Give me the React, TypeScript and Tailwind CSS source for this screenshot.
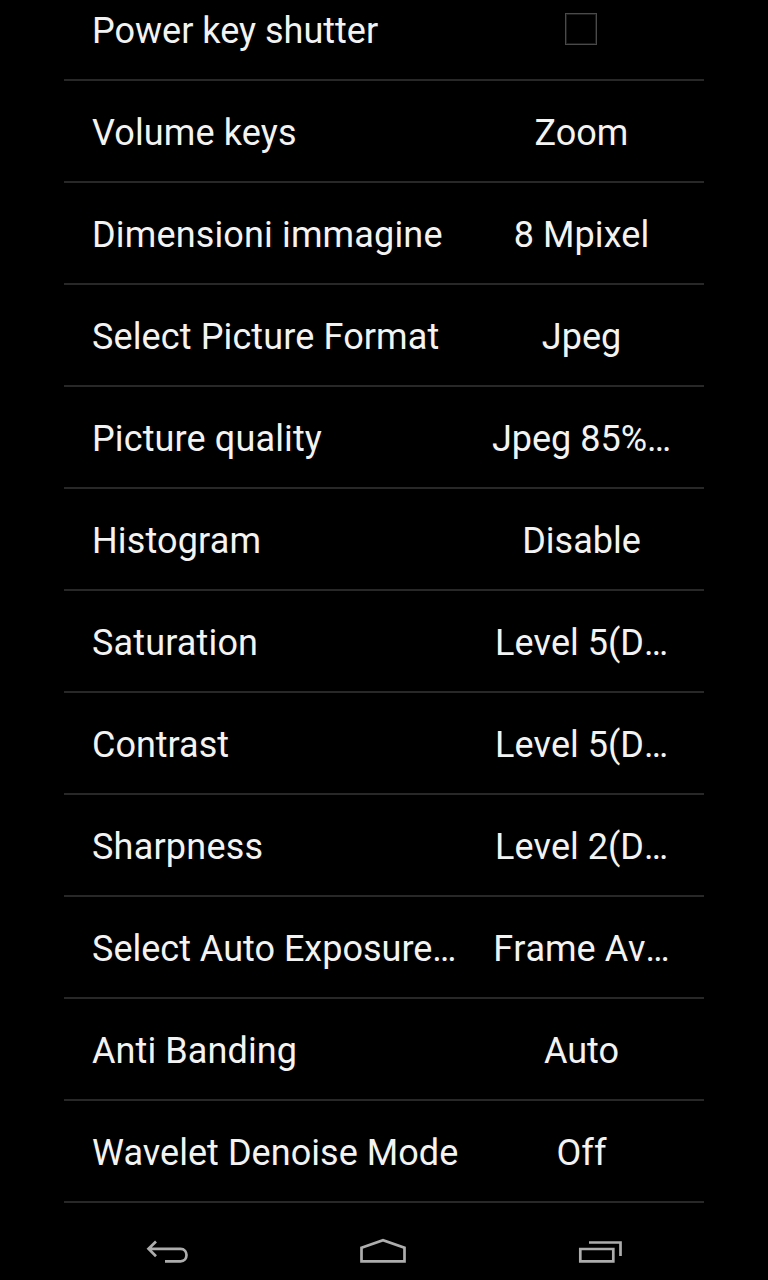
type Row = {
  label: string;
  labelClass?: string;
  value?: string;
  valueClass?: string;
};

const rows: Row[] = [
  { label: 'Power key shutter' },
  { label: 'Volume keys', labelClass: 'tracking-[0.13px]', value: 'Zoom' },
  { label: 'Dimensioni immagine', labelClass: 'tracking-[0.15px]', value: '8 Mpixel', valueClass: 'tracking-[0.1px]' },
  { label: 'Select Picture Format', labelClass: 'tracking-[0.12px]', value: 'Jpeg' },
  { label: 'Picture quality', labelClass: 'tracking-[0.13px]', value: 'Jpeg 85%…' },
  { label: 'Histogram', labelClass: 'tracking-[0.15px]', value: 'Disable' },
  { label: 'Saturation', labelClass: 'tracking-[0.15px]', value: 'Level 5(D…', valueClass: '[font-kerning:none]' },
  { label: 'Contrast', value: 'Level 5(D…', valueClass: '[font-kerning:none]' },
  { label: 'Sharpness', labelClass: 'tracking-[0.22px]', value: 'Level 2(D…', valueClass: '[font-kerning:none]' },
  { label: 'Select Auto Exposure…', value: 'Frame Av…', valueClass: '[font-kerning:none]' },
  { label: 'Anti Banding', labelClass: 'tracking-[0.1px]', value: 'Auto' },
  { label: 'Wavelet Denoise Mode', labelClass: 'tracking-[0.05px]', value: 'Off' },
];

function Checkbox() {
  return (
    <span className="mr-px mb-1 size-8 border border-[#4a4a4a]">
      <span className="block size-full border border-[#1c1c1c]" />
    </span>
  );
}

function BackIcon() {
  return (
    <svg width="44" height="26" viewBox="0 0 44 26" fill="none" stroke="#adadad" strokeWidth="2.7">
      <path d="M11 3.500 3.500 10.800l7.500 7.500M3.500 10.800H35.500c8 0 8 12.500 0 12.500H20" />
    </svg>
  );
}

function HomeIcon() {
  return (
    <svg width="48" height="26" viewBox="0 0 48 26" fill="none" stroke="#adadad" strokeWidth="2.7">
      <path d="M2.500 9.800 24 2.300 45.500 9.800v13.500h-43z" />
    </svg>
  );
}

function RecentsIcon() {
  return (
    <svg width="46" height="26" viewBox="0 0 46 26" fill="none" stroke="#adadad" strokeWidth="2.7">
      <path d="M2.300 11h33v12.300h-33zM11 4.500h31.500V18" />
    </svg>
  );
}

export default function App() {
  return (
    <div className="flex h-[1280px] w-[768px] flex-col overflow-hidden bg-black font-['Roboto',sans-serif] text-[36px] leading-[42px] text-[#f3f3f3]">
      <main className="-mt-[21px] flex flex-col px-16">
        {rows.map((row) => (
          <div
            key={row.label}
            className="flex h-[102px] items-center border-b-2 border-[#282828] pt-1 pl-7 whitespace-nowrap"
          >
            <span className={`w-[389px] ${row.labelClass ?? ''}`}>{row.label}</span>
            <span className={`flex w-[201px] justify-center ${row.valueClass ?? ''}`}>
              {row.value ?? <Checkbox />}
            </span>
          </div>
        ))}
      </main>
      <nav className="flex pt-[35px]">
        <button className="ml-[145px]" aria-label="Back"><BackIcon /></button>
        <button className="ml-[170px]" aria-label="Home"><HomeIcon /></button>
        <button className="ml-[171px]" aria-label="Recent apps"><RecentsIcon /></button>
      </nav>
    </div>
  );
}
